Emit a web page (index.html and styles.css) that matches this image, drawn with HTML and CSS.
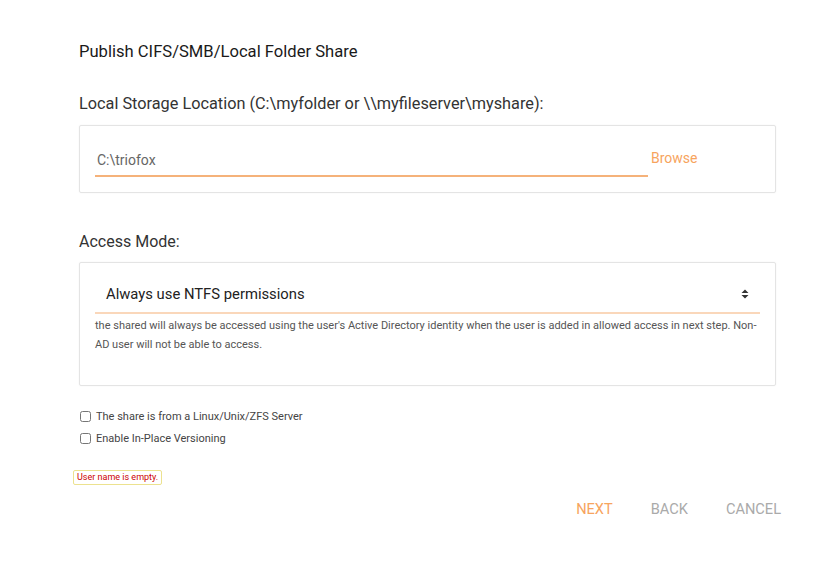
FILE: index.html
```html
<!DOCTYPE html>
<html lang="en">
<head>
    <meta charset="UTF-8">
    <title>Publish CIFS/SMB/Local Folder Share</title>
    <link rel="stylesheet" href="styles.css">
</head>
<body>
    <div class="wizard">
        <h1 class="title">Publish CIFS/SMB/Local Folder Share</h1>

        <label class="field-label">Local Storage Location (C:\myfolder or \\myfileserver\myshare):</label>
        <div class="card card-location">
            <div class="input-row">
                <input type="text" class="text-input" value="C:\triofox">
                <a class="browse">Browse</a>
            </div>
        </div>

        <label class="field-label access-label">Access Mode:</label>
        <div class="card card-access">
            <div class="select-box">
                <span class="select-value">Always use NTFS permissions</span>
                <svg class="select-arrow" width="8" height="10" viewBox="0 0 8 10">
                    <path d="M4 0.5 L7.5 4 H0.5 Z M4 9.5 L7.5 6 H0.5 Z" fill="#333"/>
                </svg>
            </div>
            <p class="help">the shared will always be accessed using the user's Active Directory identity when the user is added in allowed access in next step. Non-AD user will not be able to access.</p>
        </div>

        <div class="checks">
            <label class="check"><input type="checkbox"> The share is from a Linux/Unix/ZFS Server</label>
            <label class="check"><input type="checkbox"> Enable In-Place Versioning</label>
        </div>

        <div class="error">User name is empty.</div>

        <div class="actions">
            <button class="btn btn-next">NEXT</button>
            <button class="btn">BACK</button>
            <button class="btn">CANCEL</button>
        </div>
    </div>
</body>
</html>
```

FILE: styles.css
```css
* {
    margin: 0;
    padding: 0;
    box-sizing: border-box;
}

body {
    font-family: Roboto, "Liberation Sans", Arial, sans-serif;
    background: #fff;
    color: #333;
}

.wizard {
    width: 825px;
    padding: 42px 50px 0 79px;
    display: flex;
    flex-direction: column;
}

.title {
    font-size: 16.6px;
    font-weight: 400;
    color: #1a1a1a;
    line-height: 20px;
    margin-bottom: 32px;
}

.field-label {
    font-size: 16.3px;
    font-weight: 400;
    color: #333;
    line-height: 20px;
    margin-bottom: 11px;
}

.access-label {
    font-size: 16px;
    margin-bottom: 10px;
}

.card {
    width: 697px;
    border: 1px solid #e4e4e4;
    border-radius: 2px;
    box-shadow: 0 0 2px rgba(0, 0, 0, 0.05);
}

.card-location {
    height: 68px;
    padding: 21px 15px 0 15px;
    margin-bottom: 39px;
}

.input-row {
    display: flex;
    align-items: flex-start;
}

.text-input {
    width: 553px;
    height: 30px;
    border: none;
    border-bottom: 2px solid #f5b27a;
    font-family: inherit;
    font-size: 14px;
    color: #666;
    padding: 0 0 2px 2px;
    outline: none;
    background: transparent;
}

.browse {
    font-size: 14px;
    color: #f7a45e;
    margin-left: 3px;
    line-height: 22px;
    cursor: pointer;
}

.card-access {
    height: 124px;
    padding: 16px 15px 0 15px;
    margin-bottom: 24px;
}

.select-box {
    display: flex;
    align-items: center;
    justify-content: space-between;
    height: 35px;
    border-bottom: 2px solid #fad7ba;
    padding: 0 11px 3px 11px;
}

.select-value {
    font-size: 14.8px;
    font-weight: 400;
    color: #222;
}

.help {
    font-size: 11px;
    line-height: 19px;
    color: #555;
    margin-top: 2px;
}

.checks {
    display: flex;
    flex-direction: column;
    gap: 9px;
    margin-bottom: 25px;
}

.check {
    display: flex;
    align-items: center;
    font-size: 11px;
    color: #444;
    margin-left: 1px;
}

.check input {
    width: 11px;
    height: 11px;
    margin-right: 5px;
}

.error {
    align-self: flex-start;
    margin-left: -6px;
    font-size: 9px;
    line-height: 13px;
    color: #c00;
    border: 1px solid #ece28f;
    border-radius: 2px;
    padding: 0 3px;
}

.actions {
    display: flex;
    justify-content: flex-end;
    gap: 38px;
    margin-top: 15px;
    margin-right: -6px;
}

.btn {
    background: none;
    border: none;
    font-family: inherit;
    font-size: 14.6px;
    color: #aaa;
    cursor: pointer;
}

.btn-next {
    color: #f7a45e;
}
```
